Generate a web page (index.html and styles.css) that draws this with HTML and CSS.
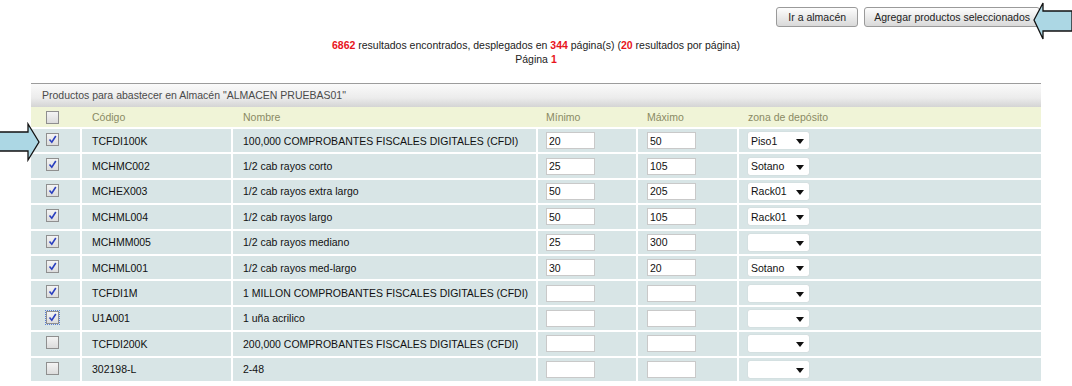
FILE: index.html
```html
<!DOCTYPE html>
<html lang="es">
<head>
  <meta charset="UTF-8">
  <title>Abastecer almacén</title>
  <link rel="stylesheet" href="styles.css">
</head>
<body>

  <div class="actions">
    <button class="btn btn-go">Ir a almacén</button>
    <button class="btn">Agregar productos seleccionados</button>
  </div>

  <!-- flecha de ayuda sobre el boton -->
  <svg class="arrow arrow-left" viewBox="0 0 40 40" width="40" height="40">
    <polygon points="1,19 10,2 10,10 39,10 39,30 10,30 10,38" />
  </svg>

  <p class="summary">
    <b>6862</b> resultados encontrados, desplegados en <b>344</b> página(s) (<b>20</b> resultados por página)<br>
    Página <b>1</b>
  </p>

  <div class="panel">
    <div class="caption">Productos para abastecer en Almacén "ALMACEN PRUEBAS01"</div>
    <table class="grid">
      <thead>
        <tr>
          <th class="c-chk"><span class="chk"></span></th>
          <th class="c-cod">Código</th>
          <th class="c-nom">Nombre</th>
          <th class="c-min">Mínimo</th>
          <th class="c-max">Máximo</th>
          <th class="c-zona">zona de depósito</th>
        </tr>
      </thead>
      <tbody>
        <tr>
          <td class="c-chk"><span class="chk on"><svg viewBox="0 0 9 9"><path d="M1.5 4.5 L3.8 7.2 L7.8 1" /></svg></span></td>
          <td>TCFDI100K</td>
          <td>100,000 COMPROBANTES FISCALES DIGITALES (CFDI)</td>
          <td><input class="num" value="20"></td>
          <td><input class="num" value="50"></td>
          <td><span class="sel">Piso1<i></i></span></td>
        </tr>
        <tr>
          <td class="c-chk"><span class="chk on"><svg viewBox="0 0 9 9"><path d="M1.5 4.5 L3.8 7.2 L7.8 1" /></svg></span></td>
          <td>MCHMC002</td>
          <td>1/2 cab rayos corto</td>
          <td><input class="num" value="25"></td>
          <td><input class="num" value="105"></td>
          <td><span class="sel">Sotano<i></i></span></td>
        </tr>
        <tr>
          <td class="c-chk"><span class="chk on"><svg viewBox="0 0 9 9"><path d="M1.5 4.5 L3.8 7.2 L7.8 1" /></svg></span></td>
          <td>MCHEX003</td>
          <td>1/2 cab rayos extra largo</td>
          <td><input class="num" value="50"></td>
          <td><input class="num" value="205"></td>
          <td><span class="sel">Rack01<i></i></span></td>
        </tr>
        <tr>
          <td class="c-chk"><span class="chk on"><svg viewBox="0 0 9 9"><path d="M1.5 4.5 L3.8 7.2 L7.8 1" /></svg></span></td>
          <td>MCHML004</td>
          <td>1/2 cab rayos largo</td>
          <td><input class="num" value="50"></td>
          <td><input class="num" value="105"></td>
          <td><span class="sel">Rack01<i></i></span></td>
        </tr>
        <tr>
          <td class="c-chk"><span class="chk on"><svg viewBox="0 0 9 9"><path d="M1.5 4.5 L3.8 7.2 L7.8 1" /></svg></span></td>
          <td>MCHMM005</td>
          <td>1/2 cab rayos mediano</td>
          <td><input class="num" value="25"></td>
          <td><input class="num" value="300"></td>
          <td><span class="sel"><i></i></span></td>
        </tr>
        <tr>
          <td class="c-chk"><span class="chk on"><svg viewBox="0 0 9 9"><path d="M1.5 4.5 L3.8 7.2 L7.8 1" /></svg></span></td>
          <td>MCHML001</td>
          <td>1/2 cab rayos med-largo</td>
          <td><input class="num" value="30"></td>
          <td><input class="num" value="20"></td>
          <td><span class="sel">Sotano<i></i></span></td>
        </tr>
        <tr>
          <td class="c-chk"><span class="chk on"><svg viewBox="0 0 9 9"><path d="M1.5 4.5 L3.8 7.2 L7.8 1" /></svg></span></td>
          <td>TCFDI1M</td>
          <td>1 MILLON COMPROBANTES FISCALES DIGITALES (CFDI)</td>
          <td><input class="num" value=""></td>
          <td><input class="num" value=""></td>
          <td><span class="sel"><i></i></span></td>
        </tr>
        <tr>
          <td class="c-chk"><span class="chk on focus"><svg viewBox="0 0 9 9"><path d="M1.5 4.5 L3.8 7.2 L7.8 1" /></svg></span></td>
          <td>U1A001</td>
          <td>1 uña acrilico</td>
          <td><input class="num" value=""></td>
          <td><input class="num" value=""></td>
          <td><span class="sel"><i></i></span></td>
        </tr>
        <tr>
          <td class="c-chk"><span class="chk"></span></td>
          <td>TCFDI200K</td>
          <td>200,000 COMPROBANTES FISCALES DIGITALES (CFDI)</td>
          <td><input class="num" value=""></td>
          <td><input class="num" value=""></td>
          <td><span class="sel"><i></i></span></td>
        </tr>
        <tr>
          <td class="c-chk"><span class="chk"></span></td>
          <td>302198-L</td>
          <td>2-48</td>
          <td><input class="num" value=""></td>
          <td><input class="num" value=""></td>
          <td><span class="sel"><i></i></span></td>
        </tr>
      </tbody>
    </table>
  </div>

  <!-- flecha de ayuda sobre la primera fila -->
  <svg class="arrow arrow-right" viewBox="0 0 40 40" width="40" height="40">
    <polygon points="39,20 28,2 28,10 -2,10 -2,29 28,29 28,38" />
  </svg>

</body>
</html>
```

FILE: styles.css
```css
body {
  margin: 0;
  font-family: "Liberation Sans", Arial, sans-serif;
  font-size: 10.5px;
  color: #222;
  background: #fff;
  position: relative;
}
.actions {
  display: flex;
  justify-content: flex-end;
  gap: 6px;
  padding: 7px 32px 0 0;
}
.btn {
  font-family: "Liberation Sans", Arial, sans-serif;
  font-size: 10.5px;
  color: #222;
  height: 20px;
  padding: 0 9px;
  border: 1px solid #9a9a9a;
  border-radius: 3px;
  background: linear-gradient(#fdfdfd, #e9e9e9 55%, #d9d9d9);
}
.btn-go {
  padding: 0 11px;
}
.arrow {
  position: absolute;
}
.arrow polygon {
  fill: #acd7e4;
  stroke: #111;
  stroke-width: 1.3;
}
.arrow-left {
  top: 1px;
  left: 1033px;
}
.arrow-right {
  top: 122px;
  left: 0;
}
.summary {
  margin: 11px 0 0;
  text-align: center;
  line-height: 14px;
}
.summary b {
  color: #e8141c;
}
.panel {
  margin: 17px 0 0 31px;
  width: 1010px;
}
.caption {
  height: 23px;
  line-height: 23px;
  padding-left: 11px;
  border-top: 1px solid #9c9c9c;
  background: linear-gradient(#fafafa, #ececec 60%, #d4d4d4);
  color: #4a4a4a;
}
.grid {
  width: 100%;
  border-collapse: separate;
  border-spacing: 0;
  table-layout: fixed;
}
.grid th,
.grid td {
  box-sizing: border-box;
  padding: 0 0 0 10px;
  text-align: left;
  white-space: nowrap;
}
.grid th {
  height: 20px;
  background: #f0f4d7;
  color: #8a8a64;
  font-weight: normal;
}
.grid td {
  height: 25.4px;
  background: #d8e5e6;
  border-top: 2px solid #fff;
  border-left: 2px solid #fff;
  color: #111;
}
.grid td:first-child {
  border-left: none;
}
.grid .c-chk { width: 49px; padding-left: 15px; }
.grid .c-cod { width: 151px; }
.grid .c-nom { width: 305px; }
.grid .c-min { width: 100px; }
.grid .c-max { width: 101px; }
.grid th.c-cod, .grid th.c-nom { padding-left: 12px; }
.grid th.c-min { padding-left: 10px; }
.grid th.c-max, .grid th.c-zona { padding-left: 11px; }
.grid td:nth-child(4) { padding-left: 8px; }
.grid td:nth-child(5), .grid td:nth-child(6) { padding-left: 9px; }
.grid td.c-chk {
  vertical-align: top;
  padding-top: 4px;
}
.chk {
  display: block;
  width: 11px;
  height: 11px;
  border: 1px solid #8f8f8f;
  background: linear-gradient(#f4f4f4, #dcdcdc);
}
.chk svg {
  display: block;
  width: 9px;
  height: 9px;
  margin: 1px;
}
.chk path {
  fill: none;
  stroke: #2a3fbf;
  stroke-width: 1.6;
}
.chk.focus {
  outline: 1px dotted #5b7fd4;
  outline-offset: 0;
}
.num {
  display: block;
  box-sizing: border-box;
  width: 49px;
  height: 17px;
  margin: 0;
  padding: 0 0 0 2px;
  border: 1px solid #c9c9c9;
  background: #fff;
  font-family: "Liberation Sans", Arial, sans-serif;
  font-size: 10.5px;
  color: #111;
}
.sel {
  display: flex;
  align-items: center;
  justify-content: space-between;
  box-sizing: border-box;
  width: 61px;
  height: 17px;
  padding: 0 5px 0 3px;
  background: #fff;
  border-radius: 2px;
  box-shadow: 0 0 1px #b8b8b8;
}
.sel i {
  margin-left: auto;
  margin-top: 2px;
  border-left: 4px solid transparent;
  border-right: 4px solid transparent;
  border-top: 5px solid #111;
}
```
